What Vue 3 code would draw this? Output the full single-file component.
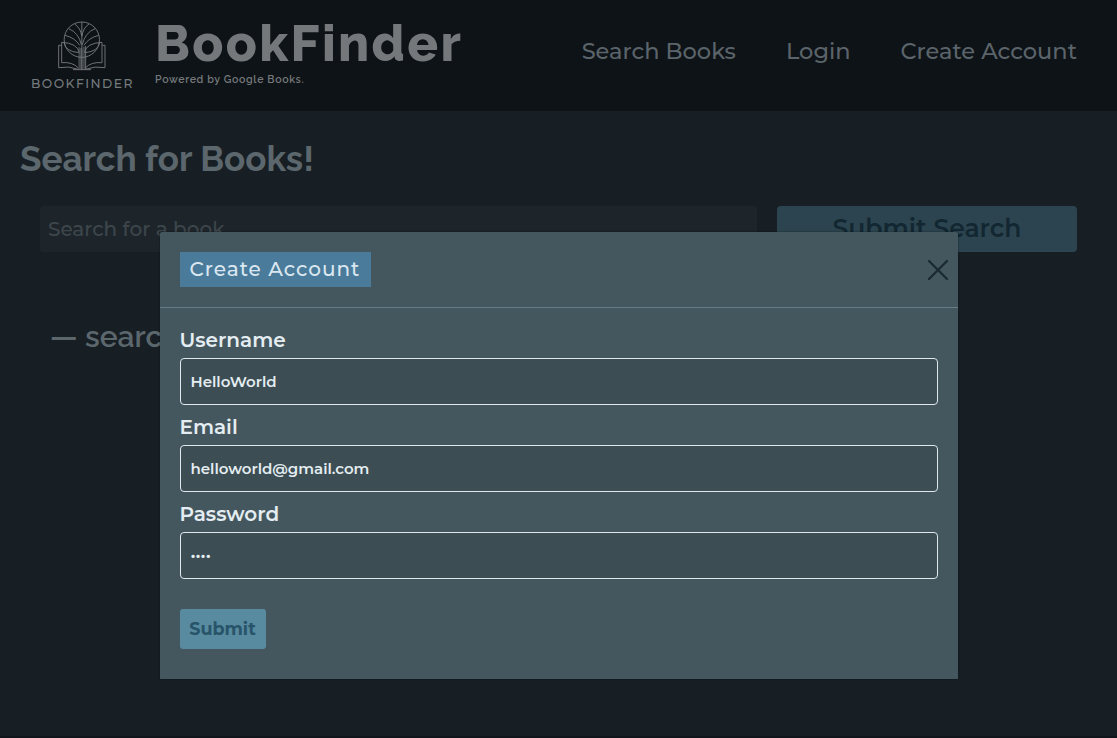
<script setup>
import { ref } from 'vue'

const links = ['Search Books', 'Login', 'Create Account']
const query = ref('')
const fields = ref([
  { id: 'username', label: 'Username', type: 'text', value: 'HelloWorld' },
  { id: 'email', label: 'Email', type: 'text', value: 'helloworld@gmail.com' },
  { id: 'password', label: 'Password', type: 'password', value: 'abcd' },
])
// Left and right halves of the tree-and-book mark
const halves = ['', 'translate(371 0) scale(-1 1)']
</script>

<template>
  <div class="page">
    <header class="header">
      <div class="logo">
        <svg class="logo-mark" viewBox="105 30 162 156" fill="none" stroke="currentColor" stroke-width="2.8">
          <circle cx="185.5" cy="89" r="53" />
          <path d="M185.5 36V180" />
          <path class="trunk" d="M175 110V178H188V116Z" />
          <path d="M192 110V178M197 108V178" />
          <g v-for="t in halves" :key="t" :transform="t">
            <path d="M185 78Q182 54 164 42" />
            <path d="M184 104Q176 68 146 56" />
            <path d="M178 128Q172 99 125 97V158Q158 155 175 174" />
            <path d="M179 106Q166 84 135 76" />
            <path d="M132 98Q136 124 176 128" />
            <path d="M124 106H116V173Q146 167 175 178" />
          </g>
          <path d="M159 179H213" />
        </svg>
        <span class="logo-name">BOOKFINDER</span>
      </div>
      <div class="brand">
        <h1 class="brand-title">BookFinder</h1>
        <p class="brand-sub">Powered by Google Books.</p>
      </div>
      <nav class="nav">
        <a v-for="link in links" :key="link" class="nav-link">{{ link }}</a>
      </nav>
    </header>

    <main class="main">
      <h2 class="heading">Search for Books!</h2>
      <form class="search" @submit.prevent>
        <input v-model="query" class="search-input" placeholder="Search for a book" />
        <button class="search-button">Submit Search</button>
      </form>
      <p class="results">— search</p>
    </main>
    <footer class="footer"></footer>

    <section class="modal">
      <div class="modal-head">
        <span class="modal-title">Create Account</span>
        <svg class="close" viewBox="0 0 22 22" fill="none" stroke="currentColor" stroke-width="2.3" stroke-linecap="round">
          <path d="M2 2L20 20M20 2L2 20" />
        </svg>
      </div>
      <form class="modal-body" @submit.prevent>
        <div v-for="f in fields" :key="f.id" class="field">
          <label class="label" :for="f.id">{{ f.label }}</label>
          <input :id="f.id" v-model="f.value" class="input" :type="f.type" />
        </div>
        <button class="submit">Submit</button>
      </form>
    </section>
  </div>
</template>

<style>
body {
  margin: 0;
  background: #171f25;
}
</style>

<style scoped>
.page {
  position: relative;
  box-sizing: border-box;
  display: flex;
  flex-direction: column;
  height: 738px;
  overflow: hidden;
  background: #171f25;
  font-family: Montserrat, Inter, sans-serif;
}
.page * {
  box-sizing: border-box;
}
.header {
  display: flex;
  height: 111px;
  padding: 0 40px 0 30px;
  background: #0e1317;
}
.logo {
  display: flex;
  flex-direction: column;
  align-items: center;
  width: 104px;
  padding-top: 20px;
  color: #74797c;
}
.logo-mark {
  display: block;
  width: 54px;
  height: 52px;
}
.trunk {
  fill: currentColor;
  fill-opacity: 0.5;
  stroke: none;
}
.logo-name {
  margin-top: 4px;
  font-size: 12.4px;
  font-weight: 500;
  line-height: 15px;
  letter-spacing: 1.45px;
  margin-right: -0.9px;
}
.brand {
  padding: 13px 0 0 21px;
  font-family: Raleway, Lato, sans-serif;
}
.brand-title {
  margin: 0;
  font-size: 51px;
  font-weight: 800;
  line-height: 60px;
  letter-spacing: 2.35px;
  color: #74787b;
}
.brand-sub {
  margin: 0;
  font-size: 10.6px;
  font-weight: 600;
  line-height: 12px;
  letter-spacing: 0.64px;
  color: #74787b;
}
.nav {
  display: flex;
  gap: 50px;
  margin-left: auto;
  padding-top: 38px;
}
.nav-link {
  font-size: 22.5px;
  font-weight: 500;
  line-height: 27px;
  color: #5b646a;
}
.main {
  flex: 1;
  padding: 27px 20px 0;
}
.heading {
  margin: 0;
  font: 700 35px/41px Raleway, Lato, sans-serif;
  color: #5c676d;
}
.search {
  display: flex;
  gap: 20px;
  padding: 27px 20px 0;
}
.search-input {
  flex: 1;
  min-width: 0;
  height: 46px;
  padding: 0 8px;
  border: 0;
  border-radius: 3px;
  background: #1d252b;
  font: 500 20px/24px Montserrat, Inter, sans-serif;
  color: #3d464b;
}
.search-input::placeholder {
  color: #3d464b;
  opacity: 1;
}
.search-button {
  width: 300px;
  height: 46px;
  padding: 0 0 2px;
  border: 0;
  border-radius: 4px;
  background: #2c444f;
  font: 600 25px/30px Montserrat, Inter, sans-serif;
  color: #122731;
}
.results {
  margin: 67px 0 0 30px;
  font: 600 30px/35px Raleway, Lato, sans-serif;
  color: #5c676d;
}
.footer {
  height: 2px;
  background: #10161b;
}
.modal {
  position: absolute;
  left: 159.5px;
  top: 232px;
  width: 798px;
  height: 447px;
  border-radius: 2px 2px 0 0;
  background: #44575f;
  box-shadow: 0 0 2px rgba(0, 0, 0, 0.5);
}
.modal-head {
  display: flex;
  align-items: center;
  justify-content: space-between;
  height: 76px;
  padding: 0 9px 0 20px;
  border-bottom: 1px solid #637c86;
}
.modal-title {
  padding: 5px 10.5px 5px 10px;
  background: #4a7b9b;
  font-size: 20px;
  font-weight: 500;
  line-height: 25px;
  letter-spacing: 1px;
  color: #dbe7f0;
}
.close {
  width: 22px;
  height: 22px;
  color: #1b2a32;
}
.modal-body {
  padding: 20px 20px 0;
}
.field {
  height: 87px;
}
.label {
  display: block;
  font-size: 20px;
  font-weight: 600;
  line-height: 24px;
  color: #e4edf1;
}
.input {
  display: block;
  width: 100%;
  height: 47px;
  margin-top: 6px;
  padding: 0 10px;
  border: 1px solid #dfe9ed;
  border-radius: 4px;
  background: #3c4d54;
  font: 600 15px/18px Montserrat, Inter, sans-serif;
  color: #e4edf1;
}
.submit {
  display: block;
  width: 86px;
  height: 40px;
  margin-top: 20px;
  padding: 0 0 1px;
  border: 0;
  border-radius: 3px;
  background: #588b9f;
  font: 700 17.5px/21px Montserrat, Inter, sans-serif;
  color: #28546a;
}
</style>
